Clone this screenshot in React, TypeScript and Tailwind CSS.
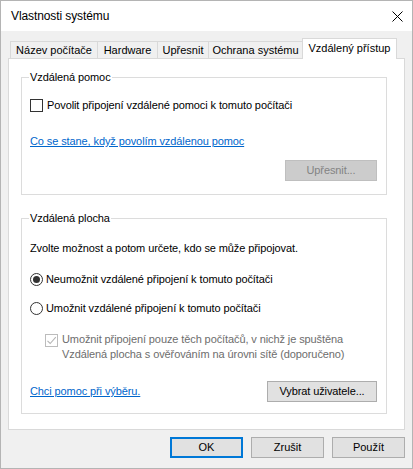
import React from 'react';
import clsx from 'clsx';

type Tab = { label: string; width: string; active?: boolean };

const tabs: Tab[] = [
  { label: 'Název počítače', width: 'w-[88px]' },
  { label: 'Hardware', width: 'w-[61px]' },
  { label: 'Upřesnit', width: 'w-[52px]' },
  { label: 'Ochrana systému', width: 'w-[95px]' },
  { label: 'Vzdálený přístup', width: 'w-[95px]', active: true },
];

function CheckBox({ checked, disabled }: { checked?: boolean; disabled?: boolean }) {
  return (
    <span
      className={clsx(
        'flex h-[13px] w-[13px] shrink-0 items-center justify-center border bg-white',
        disabled ? 'border-[#bcbcbc]' : 'border-[#333333]'
      )}
    >
      {checked && (
        <svg width="11" height="11" viewBox="0 0 11 11">
          <path
            d="M1.5 5.8 L4.2 8.5 L9.8 2.2"
            fill="none"
            stroke={disabled ? '#b5b5b5' : '#333333'}
            strokeWidth="1.1"
          />
        </svg>
      )}
    </span>
  );
}

function Radio({ checked }: { checked?: boolean }) {
  return (
    <span className="flex h-[13px] w-[13px] shrink-0 items-center justify-center rounded-full border border-[#333333] bg-white">
      {checked && <span className="h-[7px] w-[7px] rounded-full bg-[#333333]" />}
    </span>
  );
}

function Button({
  children,
  width,
  primary,
  disabled,
}: {
  children: React.ReactNode;
  width: string;
  primary?: boolean;
  disabled?: boolean;
}) {
  return (
    <button
      className={clsx(
        'flex h-[21px] items-center justify-center text-[11px] leading-none',
        width,
        primary && 'border-2 border-[#0078d7] bg-[#e1e1e1] text-black',
        !primary && !disabled && 'border border-[#adadad] bg-[#e1e1e1] text-black',
        disabled && 'border border-[#bfbfbf] bg-[#cccccc] text-[#838383]'
      )}
    >
      {children}
    </button>
  );
}

function GroupBox({ title, children }: { title: string; children: React.ReactNode }) {
  return (
    <fieldset className="ml-[12px] w-[366px] border border-[#dcdcdc]">
      <legend className="ml-[7px] px-[1px] text-[11px] leading-[14px] tracking-[-0.1px]">{title}</legend>
      {children}
    </fieldset>
  );
}

export default function App() {
  return (
    <div className="flex h-[469px] w-[413px] flex-col border border-[#b4b4b4] bg-[#f0f0f0] font-['Liberation_Sans',Arial,sans-serif] text-black">
      {/* title bar */}
      <div className="flex h-[30px] shrink-0 items-center justify-between bg-white pl-[10px] pr-[9px]">
        <span className="text-[12px] tracking-[-0.1px]">Vlastnosti systému</span>
        <svg width="11" height="11" viewBox="0 0 11 11">
          <path d="M0.5 0.5 L10.5 10.5 M10.5 0.5 L0.5 10.5" stroke="#000" strokeWidth="1" />
        </svg>
      </div>

      <div className="flex flex-1 flex-col pl-[7px] pt-[7px]">
        {/* tab strip */}
        <div className="relative z-10 ml-[2px] flex h-[20px] items-end">
          {tabs.map((t, i) => (
            <div
              key={t.label}
              className={clsx(
                'flex items-center justify-center border-x border-t border-[#d9d9d9] text-[11px]',
                t.width,
                i > 0 && '-ml-px',
                t.active ? '-mb-px h-[21px] bg-white pb-[2px]' : 'h-[17px] bg-[#f0f0f0]'
              )}
            >
              {t.label}
            </div>
          ))}
        </div>

        {/* tab page */}
        <div className="flex h-[372px] w-[397px] flex-col border border-[#d9d9d9] bg-white pt-[11px]">
          <GroupBox title="Vzdálená pomoc">
            <div className="flex flex-col pb-[13px] pl-[8px] pr-[9px] text-[11px] leading-[15px] tracking-[-0.1px]">
              <label className="mt-[14px] flex items-center gap-[4px]">
                <CheckBox />
                <span>Povolit připojení vzdálené pomoci k tomuto počítači</span>
              </label>
              <a className="mt-[21px] self-start text-[#0066cc] underline">
                Co se stane, když povolím vzdálenou pomoc
              </a>
              <div className="mt-[11px] flex justify-end">
                <Button width="w-[92px]" disabled>
                  Upřesnit...
                </Button>
              </div>
            </div>
          </GroupBox>

          <div className="mt-[16px]">
            <GroupBox title="Vzdálená plocha">
              <div className="flex flex-col pb-[11px] pl-[8px] pr-[9px] text-[11px] leading-[15px] tracking-[-0.1px]">
                <p className="mt-[16px]">Zvolte možnost a potom určete, kdo se může připojovat.</p>
                <label className="mt-[16px] flex items-center gap-[3px]">
                  <Radio checked />
                  <span>Neumožnit vzdálené připojení k tomuto počítači</span>
                </label>
                <label className="mt-[14px] flex items-center gap-[3px]">
                  <Radio />
                  <span>Umožnit vzdálené připojení k tomuto počítači</span>
                </label>
                <label className="ml-[15px] mt-[16px] flex items-start gap-[4px] text-[#6d6d6d]">
                  <span className="pt-[2px]">
                    <CheckBox checked disabled />
                  </span>
                  <span>
                    Umožnit připojení pouze těch počítačů, v nichž je spuštěna
                    <br />
                    Vzdálená plocha s ověřováním na úrovni sítě (doporučeno)
                  </span>
                </label>
                <div className="mt-[19px] flex items-center justify-between">
                  <a className="text-[#0066cc] underline">Chci pomoc při výběru.</a>
                  <Button width="w-[110px]">Vybrat uživatele...</Button>
                </div>
              </div>
            </GroupBox>
          </div>
        </div>

        {/* dialog buttons */}
        <div className="mt-[7px] flex w-[397px] justify-end gap-[8px]">
          <Button width="w-[73px]" primary>
            OK
          </Button>
          <Button width="w-[73px]">Zrušit</Button>
          <Button width="w-[73px]">Použít</Button>
        </div>
      </div>
    </div>
  );
}
